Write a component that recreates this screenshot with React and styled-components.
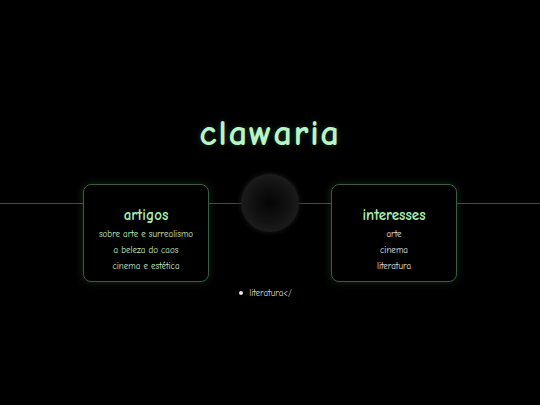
import React from "react";
import styled, { createGlobalStyle } from "styled-components";

const Global = createGlobalStyle`
  html, body { margin: 0; padding: 0; background: #000; }
  body { font-family: "Comic Sans MS", "Comic Neue", "Chalkboard SE", cursive; }
`;

const Page = styled.div`
  width: 540px;
  height: 405px;
  background: #000;
  display: flex;
  flex-direction: column;
  align-items: center;
  padding-top: 112px;
  box-sizing: border-box;
  overflow: hidden;
`;

const Title = styled.h1`
  margin: 0;
  font-size: 37px;
  line-height: 42px;
  font-weight: 700;
  color: #b8f5c6;
  letter-spacing: 1.5px;
  text-shadow: 0 0 6px rgba(150, 240, 170, 0.25);
`;

const Stage = styled.div`
  position: relative;
  width: 100%;
  margin-top: 30px;
  display: flex;
  justify-content: center;

  &::before {
    content: "";
    position: absolute;
    left: 0;
    right: 0;
    top: 19px;
    height: 1px;
    background: #34543b;
  }
`;

const Card = styled.section`
  position: relative;
  z-index: 1;
  width: 126px;
  height: 98px;
  box-sizing: border-box;
  padding-top: 20px;
  border: 1px solid #3c5a42;
  border-radius: 8px;
  background: #000;
  box-shadow: 0 0 8px rgba(90, 160, 100, 0.25);
  display: flex;
  flex-direction: column;
  align-items: center;
`;

const Heading = styled.h2`
  margin: 0 0 1px;
  font-size: 15px;
  line-height: 20px;
  font-weight: 700;
  color: ${(p) => p.$color};
`;

const Item = styled.div`
  font-size: 9px;
  line-height: 16px;
  color: ${(p) => p.$color};
`;

const Orb = styled.div`
  position: relative;
  z-index: 1;
  width: 58px;
  height: 58px;
  margin: -10px 32px 0;
  border-radius: 50%;
  background: radial-gradient(circle, #050505 0%, #121212 45%, #1d1d1d 75%, #222 90%, rgba(30,30,30,0.5) 100%);
  box-shadow: 0 0 4px 1px rgba(35, 35, 35, 0.6);
`;

const List = styled.ul`
  margin: 4px 0 0;
  padding: 0 9px 0 0;
  list-style: none;
  text-align: center;
`;

const ListItem = styled.li`
  font-size: 9px;
  line-height: 14px;
  color: #dcdcdc;

  &::before {
    content: "";
    display: inline-block;
    width: 4px;
    height: 4px;
    border-radius: 50%;
    background: #e6e6e6;
    vertical-align: 1px;
    margin-right: 6px;
  }
`;

export default function App() {
  return (
    <>
      <Global />
      <Page>
        <Title>clawaria</Title>
        <Stage>
          <Card>
            <Heading $color="#a9efb3">artigos</Heading>
            <Item $color="#c6efc8">sobre arte e surrealismo</Item>
            <Item $color="#c6efc8">a beleza do caos</Item>
            <Item $color="#c6efc8">cinema e estética</Item>
          </Card>
          <Orb />
          <Card>
            <Heading $color="#a9efb3">interesses</Heading>
            <Item $color="#e6e6e6">arte</Item>
            <Item $color="#e6e6e6">cinema</Item>
            <Item $color="#e6e6e6">literatura</Item>
          </Card>
        </Stage>
        <List>
          <ListItem>literatura&lt;/</ListItem>
        </List>
      </Page>
    </>
  );
}
